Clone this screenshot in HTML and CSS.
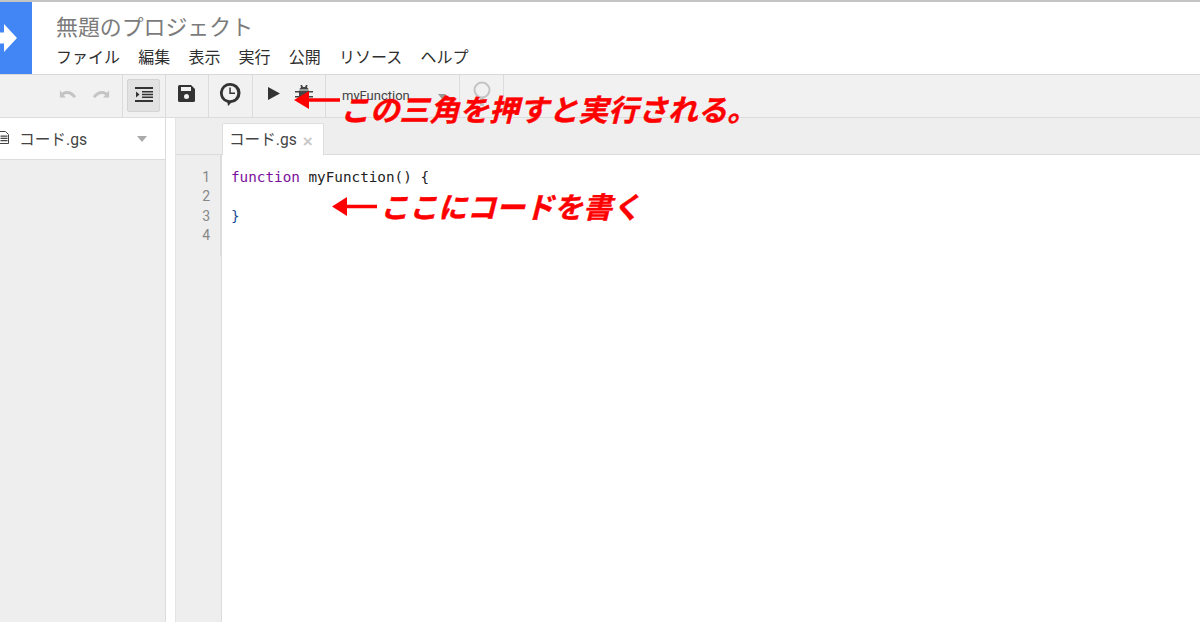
FILE: index.html
```html
<!DOCTYPE html>
<html lang="ja">
<head>
<meta charset="utf-8">
<title>無題のプロジェクト</title>
<link rel="stylesheet" href="styles.css">
</head>
<body>
<div class="app">
  <header class="header">
    <div class="logo">
      <svg width="32" height="72" viewBox="0 0 32 72"><path d="M0 30.500h4V22l13 14-13 14v-8.500H0z" fill="#fff"/></svg>
    </div>
    <div class="titles">
      <div class="title">無題のプロジェクト</div>
      <nav class="menu">
        <span>ファイル</span><span>編集</span><span>表示</span><span>実行</span><span>公開</span><span>リソース</span><span>ヘルプ</span>
      </nav>
    </div>
  </header>
  <div class="toolbar">
    <div class="group g-undo">
      <svg width="19" height="12" viewBox="0 0 22 12"><path d="M1 2v8h7L5.500 7.500C8 5 13 5 17 10.500l3-1.500C15 1.500 8 1 3.500 4.500z" fill="#c4c4c4"/></svg>
      <svg width="19" height="12" viewBox="0 0 22 12"><path d="M21 2v8h-7l2.500-2.500C14 5 9 5 5 10.500L2 9C7 1.500 14 1 18.500 4.500z" fill="#c4c4c4"/></svg>
    </div>
    <div class="group g-indent">
      <div class="pressed">
        <svg width="18" height="15" viewBox="0 0 18 15"><path d="M0 0h18v2H0zM7 4h11v1.500H7zM7 6.700h11v1.500H7zM7 9.400h11v1.500H7zM0 13h18v2H0z" fill="#333"/><path d="M1 4.500v6l3.500-3z" fill="#333"/></svg>
      </div>
    </div>
    <div class="group g-save">
      <svg class="lift" width="17" height="17" viewBox="0 0 17 17"><path d="M0 1.500A1.500 1.500 0 0 1 1.500 0H13l4 4v11.500a1.500 1.500 0 0 1-1.500 1.500h-14A1.500 1.500 0 0 1 0 15.500z" fill="#333"/><rect x="3" y="2" width="10" height="4" fill="#f1f1f1"/><circle cx="8.500" cy="11.500" r="2.500" fill="#f1f1f1"/></svg>
    </div>
    <div class="group g-clock">
      <svg class="lift" width="22" height="24" viewBox="0 0 22 24"><path d="M11 1a10 10 0 0 1 1 20l-3 3-.5-3.300A10 10 0 0 1 11 1z" fill="#333"/><circle cx="11" cy="11" r="7.300" fill="#f1f1f1"/><path d="M10.300 5.500h1.500v5h4.200V12h-5.700z" fill="#333"/></svg>
    </div>
    <div class="group g-run">
      <svg class="lift" width="12" height="13" viewBox="0 0 12 13"><path d="M0 0l12 6.500L0 13z" fill="#333"/></svg>
      <svg class="bug lift" width="18" height="20" viewBox="0 0 18 20"><path d="M6 3.500L5.500 1H7l1 2h2l1-2h1.500L12 3.500c1 .5 1.500 1.500 1.500 2h-9c0-.5.500-1.500 1.500-2zM4 6.500h10V13a5 5 0 0 1-10 0z" fill="#444"/><path d="M0 7h4v1.500H0zM14 7h4v1.500h-4zM0 12h4v1.500H0zM14 12h4v1.500h-4z" fill="#444"/></svg>
    </div>
    <div class="group g-select">
      <span>myFunction</span>
      <i class="caret"></i>
    </div>
    <div class="group g-search">
      <svg class="lift" width="20" height="26" viewBox="0 0 20 26"><circle cx="10" cy="9" r="7.500" fill="none" stroke="#c4c4c4" stroke-width="2"/><path d="M10 17v8" stroke="#c4c4c4" stroke-width="4"/></svg>
    </div>
  </div>
  <div class="workspace">
    <aside class="side">
      <div class="file">
        <svg class="doc" width="10" height="13" viewBox="0 0 10 13"><path d="M.5.500h6l3 3v9H.5z" fill="#fff" stroke="#444"/><path d="M1.500 4.500h7v1.200h-7zM1.500 6.800h7V8h-7zM1.500 9h7v1.200h-7z" fill="#444"/></svg>
        <span class="file-name">コード.gs</span>
        <i class="caret file-caret"></i>
      </div>
    </aside>
    <main class="main">
      <div class="tabs">
        <div class="tab"><span>コード.gs</span><b>×</b></div>
      </div>
      <div class="editor">
        <div class="gutter"><div class="nums">1<br>2<br>3<br>4</div></div>
        <pre class="code"><span class="kw">function</span> myFunction() {

<span class="br">}</span></pre>
      </div>
    </main>
  </div>
  <div class="note note-run">
    <svg class="arrow-run" width="46" height="18" viewBox="0 0 46 18"><path d="M0 9L15 0v7.300h31v3.400H15V18z" fill="#f00"/></svg>
    <span>この三角を押すと実行される。</span>
  </div>
  <div class="note note-code">
    <svg width="45" height="19" viewBox="0 0 45 19"><path d="M0 9.500L15 0v7.800h30v3.400H15V19z" fill="#f00"/></svg>
    <span>ここにコードを書く</span>
  </div>
</div>
</body>
</html>
```
FILE: styles.css
```css
* { box-sizing: border-box; }
html, body { margin: 0; height: 100%; overflow: hidden; }
body { background: #fff; font-family: "Noto Sans CJK JP", Roboto, sans-serif; color: #333; }
.app { position: relative; width: 1200px; height: 622px; display: flex; flex-direction: column; border-top: 2px solid #c4c4c4; }
.header { height: 72px; display: flex; flex: none; }
.logo { width: 32px; background: #4285f4; }
.logo svg { display: block; }
.titles { margin-left: 24px; }
.title { font-size: 21.900px; line-height: 30px; margin-top: 9px; color: #7b7b7b; }
.menu { display: flex; gap: 18.200px; margin-top: 3px; font-size: 16px; line-height: 24px; color: #2e2e2e; }
.toolbar { height: 44px; flex: none; display: flex; background: #f1f1f1; border-top: 1px solid #d8d8d8; border-bottom: 1px solid #dcdcdc; }
.group { display: flex; align-items: center; border-right: 1px solid #dcdcdc; height: 100%; }
.lift { margin-bottom: 5px; }
.g-undo { width: 123px; padding-left: 59px; gap: 13px; }
.g-undo svg { margin-bottom: 5px; }
.g-indent { width: 43px; padding-left: 4px; }
.pressed { width: 33px; height: 33px; margin-bottom: 1px; background: #e2e2e2; border: 1px solid #d4d4d4; border-radius: 2px; display: flex; align-items: center; justify-content: center; }
.pressed svg { margin-bottom: 3px; }
.g-save { width: 43px; padding-left: 12px; }
.g-clock { width: 44px; padding-left: 10px; }
.g-run { width: 73px; padding-left: 15px; }
.bug { margin-left: 15px; }
.g-select { width: 134px; padding-left: 16px; font: 13px/1 Roboto, sans-serif; color: #444; }
.g-select span { margin-bottom: 2px; }
.caret { width: 0; height: 0; border: 4px solid transparent; border-top: 5px solid #999; border-bottom: 0; }
.g-select .caret { margin-left: 28px; }
.g-search { width: 44px; padding-left: 12px; }
.workspace { flex: 1; display: flex; min-height: 0; }
.side { width: 166px; flex: none; background: #eee; border-right: 1px solid #dcdcdc; }
.file { height: 42px; background: #fff; border-bottom: 1px solid #dcdcdc; display: flex; align-items: center; }
.doc { margin-left: -1px; margin-bottom: 2px; }
.file-name { margin-left: 10px; font: 15.700px/1 Roboto, "Noto Sans CJK JP", sans-serif; color: #444; margin-top: 2px; }
.file-caret { margin-left: 50px; border-width: 5px; border-top-width: 6px; border-bottom: 0; border-top-color: #aaa; }
.main { flex: 1; margin-left: 9px; display: flex; flex-direction: column; border-left: 1px solid #e4e4e4; min-width: 0; }
.tabs { height: 37px; flex: none; background: #eee; border-bottom: 1px solid #dcdcdc; padding: 5px 0 0 46px; }
.tab { width: 102px; height: 32px; background: #fff; border: 1px solid #ddd; border-bottom: 0; border-radius: 2px 2px 0 0; display: flex; align-items: center; padding: 3px 0 0 6px; font: 15.600px/1 Roboto, "Noto Sans CJK JP", sans-serif; color: #444; }
.tab b { margin-left: 6px; font: bold 17px/1 "Liberation Sans", sans-serif; color: #c8c8c8; }
.editor { flex: 1; display: flex; min-height: 0; }
.gutter { width: 46px; flex: none; background: #eee; border-right: 1px solid #dcdcdc; }
.nums { height: 101px; padding: 13px 11px 0 0; text-align: right; font: 14px/19.300px Roboto, sans-serif; color: #888; box-shadow: inset -1px 0 0 #ddd; }
.code { margin: 13px 0 0 9px; font: 14.300px/19.300px "DejaVu Sans Mono", monospace; color: #222; }
.kw { color: #7a0f9c; }
.br { color: #1a4f9c; }
.note { position: absolute; display: flex; align-items: center; color: #f00; font-weight: 700; font-style: italic; white-space: nowrap; -webkit-text-stroke: 0.4px #f00; }
.note-run { left: 294px; top: 85px; font-size: 29.800px; line-height: 42px; }
.arrow-run { margin-bottom: 16px; }
.note-run span { margin-left: 0; }
.note-code { left: 332px; top: 183px; font-size: 29px; line-height: 42px; }
.note-code span { margin-left: 3px; position: relative; top: -1px; }
```
